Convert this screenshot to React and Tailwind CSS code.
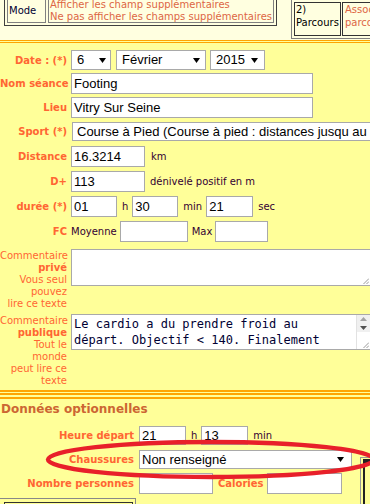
const Arrow = () => (
  <svg width="7" height="5" viewBox="0 0 7 5" className="shrink-0">
    <polygon points="0,0 7,0 3.5,5" fill="#000" />
  </svg>
);

const Grip = () => (
  <svg width="6" height="6" viewBox="0 0 6 6" className="absolute right-[1px] bottom-[1px]">
    <line x1="6" y1="0.5" x2="0.5" y2="6" stroke="#9a9a9a" strokeWidth="1" />
    <line x1="6" y1="3.5" x2="3.5" y2="6" stroke="#9a9a9a" strokeWidth="1" />
  </svg>
);

function Field({ className, children }) {
  return (
    <div className={`bg-white border border-[#a9a9a9] flex items-center pl-[2px] shrink-0 font-['Liberation_Sans',Arial,sans-serif] text-[13px] text-black whitespace-nowrap overflow-hidden ${className}`}>
      {children}
    </div>
  );
}

function Pick({ className, children }) {
  return (
    <div className={`bg-white border border-[#a9a9a9] flex items-center justify-between shrink-0 font-['Liberation_Sans',Arial,sans-serif] text-[13px] text-black whitespace-nowrap overflow-hidden ${className}`}>
      <span>{children}</span>
      <Arrow />
    </div>
  );
}

const lbl = "w-[67px] shrink-0 text-right font-bold text-[#ff6633] whitespace-nowrap";
const lbl2 = "w-[134px] shrink-0 text-right font-bold text-[#ff6633] whitespace-nowrap";
const small = "text-[#330033] whitespace-nowrap";

export default function App() {
  return (
    <div className="w-[370px] h-[504px] overflow-hidden relative bg-[#ffff99] font-['DejaVu_Sans',Verdana,sans-serif] text-[10px]">
      {/* haut de page */}
      <div className="h-[40px] bg-[#ffffe0] flex items-start overflow-hidden">
        <div className="ml-[4px] mt-[-5px] flex gap-[2px] p-[2px] border border-[#404040] shrink-0">
          <div className="w-[39px] border border-[#808080] pl-[1px] flex items-center text-[#000033]">Mode</div>
          <div className="w-[226px] border border-[#808080] pl-[1px] leading-[11.5px] text-[#dd6644] whitespace-nowrap">
            <div>Afficher les champ supplémentaires</div>
            <div>Ne pas afficher les champs supplémentaires</div>
          </div>
        </div>
        <div className="ml-[14px] mt-[-1px] flex gap-[1px] p-[2px] border border-[#808080] shrink-0">
          <div className="w-[47px] border border-[#333333] pl-[1px] pb-[6px] leading-[13px] text-black">
            2)<br />Parcours
          </div>
          <div className="w-[70px] border border-[#333333] pl-[2px] pb-[6px] leading-[13px] text-[#dd6644] whitespace-nowrap">
            Associer<br />parcours
          </div>
        </div>
      </div>

      {/* formulaire principal */}
      <div className="border-t-[3px] border-b-[5px] border-double border-[#ffa500] pb-[3px]">
        <div className="flex items-center h-[20px] mt-[7px]">
          <div className={lbl}>Date : (*)</div>
          <Pick className="ml-[4px] w-[40px] h-[20px] pl-[5px] pr-[4px]">6</Pick>
          <Pick className="ml-[5px] w-[90px] h-[20px] pl-[5px] pr-[5px]">Février</Pick>
          <Pick className="ml-[4px] w-[55px] h-[20px] pl-[5px] pr-[6px]">2015</Pick>
        </div>
        <div className="flex items-center h-[21px] mt-[3px]">
          <div className={lbl}>Nom séance</div>
          <Field className="ml-[4px] w-[242px] h-[21px]">Footing</Field>
        </div>
        <div className="flex items-center h-[21px] mt-[3px]">
          <div className={lbl}>Lieu</div>
          <Field className="ml-[4px] w-[242px] h-[21px]">Vitry Sur Seine</Field>
        </div>
        <div className="flex items-center h-[19px] mt-[4px]">
          <div className={lbl}>Sport (*)</div>
          <Field className="ml-[5px] w-[330px] h-[19px] pl-[4px]">Course à Pied (Course à pied : distances jusqu au marathon)</Field>
        </div>
        <div className="flex items-center h-[21px] mt-[5px]">
          <div className={lbl}>Distance</div>
          <Field className="ml-[4px] w-[74px] h-[21px]">16.3214</Field>
          <span className={`ml-[6px] ${small}`}>km</span>
        </div>
        <div className="flex items-center h-[21px] mt-[4px]">
          <div className={lbl}>D+</div>
          <Field className="ml-[4px] w-[74px] h-[21px]">113</Field>
          <span className={`ml-[5px] ${small}`}>dénivelé positif en m</span>
        </div>
        <div className="flex items-center h-[21px] mt-[4px]">
          <div className={lbl}>durée (*)</div>
          <Field className="ml-[4px] w-[46px] h-[21px]">01</Field>
          <span className={`ml-[5px] ${small}`}>h</span>
          <Field className="ml-[4px] w-[46px] h-[21px]">30</Field>
          <span className={`ml-[5px] ${small}`}>min</span>
          <Field className="ml-[4px] w-[47px] h-[21px]">21</Field>
          <span className={`ml-[5px] ${small}`}>sec</span>
        </div>
        <div className="flex items-center h-[21px] mt-[4px]">
          <div className={lbl}>FC</div>
          <span className={`ml-[4px] ${small}`}>Moyenne</span>
          <Field className="ml-[3px] w-[68px] h-[21px]"></Field>
          <span className={`ml-[4px] ${small}`}>Max</span>
          <Field className="ml-[3px] w-[53px] h-[21px]"></Field>
        </div>
        <div className="flex items-start mt-[7px]">
          <div className={`${lbl} font-normal leading-[12px] mt-[1px]`}>
            Commentaire<br /><b>privé</b><br />Vous seul<br />pouvez<br />lire ce texte
          </div>
          <div className="ml-[4px] w-[300px] h-[37px] shrink-0 bg-white border border-[#a9a9a9] relative">
            <Grip />
          </div>
        </div>
        <div className="flex items-start mt-[4px]">
          <div className={`${lbl} font-normal leading-[12px] mt-[1px]`}>
            Commentaire<br /><b>publique</b><br />Tout le<br />monde<br />peut lire ce<br />texte
          </div>
          <div className="ml-[4px] w-[300px] h-[36px] shrink-0 bg-white border border-[#a9a9a9] relative flex">
            <div className="flex-1 pl-[2px] pt-[2px] font-['DejaVu_Sans_Mono',monospace] text-[12px] leading-[15.5px] text-[#000033] whitespace-nowrap overflow-hidden">
              <div>Le cardio a du prendre froid au</div>
              <div>départ. Objectif &lt; 140. Finalement</div>
            </div>
            <div className="w-[14px] shrink-0 flex flex-col border-l border-[#e2e2e2]">
              <div className="h-[8px] bg-[#f0f0f0] flex items-center justify-center">
                <svg width="7" height="4" viewBox="0 0 7 4"><polygon points="0,4 7,4 3.5,0" fill="#a3a3a3" /></svg>
              </div>
              <div className="h-[9px] bg-[#f0f0f0] flex items-center justify-center">
                <svg width="7" height="4" viewBox="0 0 7 4"><polygon points="0,0 7,0 3.5,4" fill="#505050" /></svg>
              </div>
              <div className="flex-1 bg-white" />
            </div>
            <Grip />
          </div>
        </div>
      </div>

      {/* données optionnelles */}
      <div className="mt-[2px] border-t-2 border-[#ffa500] flex">
        <div className="w-[360px] shrink-0">
          <div className="pt-[3px] pl-[1px] leading-[15px] text-[12px] font-bold text-[#cc6633]">Données optionnelles</div>
          <div className="flex items-center h-[19px] mt-[9px]">
            <div className={lbl2}>Heure départ</div>
            <Field className="ml-[5px] w-[47px] h-[19px]">21</Field>
            <span className={`ml-[5px] ${small}`}>h</span>
            <Field className="ml-[4px] w-[47px] h-[19px]">13</Field>
            <span className={`ml-[5px] ${small}`}>min</span>
          </div>
          <div className="flex items-center h-[19px] mt-[5px]">
            <div className={lbl2}>Chaussures</div>
            <Pick className="ml-[5px] w-[213px] h-[19px] pl-[2px] pr-[7px]">Non renseigné</Pick>
          </div>
          <div className="flex items-center h-[21px] mt-[4px]">
            <div className={lbl2}>Nombre personnes</div>
            <Field className="ml-[5px] w-[74px] h-[21px]"></Field>
            <span className="ml-[5px] font-bold text-[#ff6633]">Calories</span>
            <Field className="ml-[4px] w-[75px] h-[21px]"></Field>
          </div>
          <div className="mt-[4px] w-[136px] border-t border-r border-[#888888] pt-[3px] pl-[4px] pr-[2px]">
            <div className="h-[12px] border-t border-x border-[#333333]" />
          </div>
        </div>
        <div className="w-[10px] mt-[58px] border-l border-t border-[#999999] pl-[2px] pt-[1px]">
          <div className="h-[60px] border-l-2 border-t-[5px] border-[#222222]" />
        </div>
      </div>

      {/* annotation */}
      <svg className="absolute left-0 top-0 pointer-events-none" width="370" height="504">
        <ellipse cx="211" cy="459.5" rx="163" ry="17.5" fill="none" stroke="#e8202a" strokeWidth="4.5" />
      </svg>
    </div>
  );
}
